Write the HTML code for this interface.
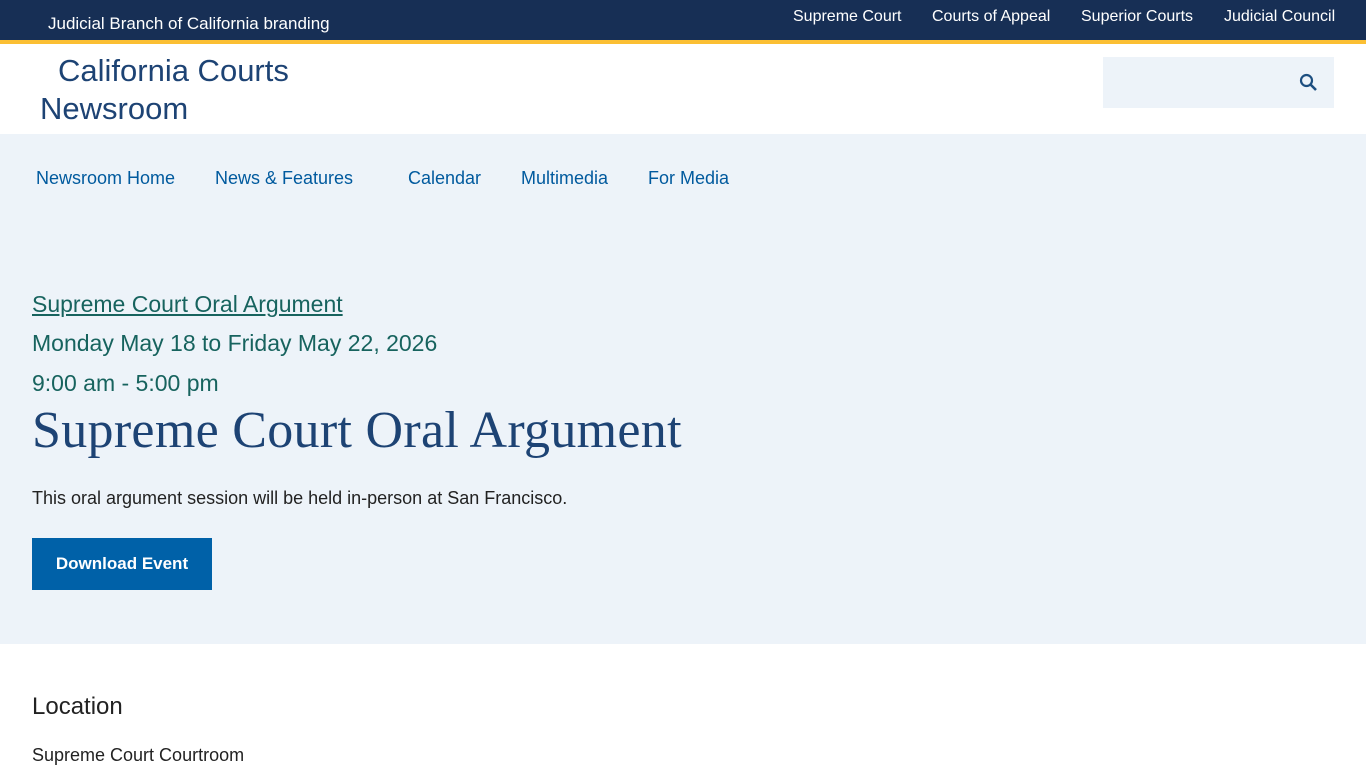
<!DOCTYPE html>
<html><head><meta charset="utf-8"><style>
*{margin:0;padding:0;box-sizing:border-box}
body{width:1366px;height:768px;overflow:hidden;font-family:"Liberation Sans",sans-serif;background:#fff}
.top{height:40px;background:#172f55;position:relative;color:#fff}
.brand{position:absolute;left:32px;top:14px;font-size:17px}
.tl{position:absolute;top:8px;font-size:16px}
.stripe{height:4px;background:#fbbf33}
.hdr{height:90px;position:relative}
.logo{position:absolute;left:40px;top:8px;font-size:31px;line-height:38px;color:#1d4374}
.search{position:absolute;left:1103px;top:13px;width:231px;height:51px;background:#edf3f9}
.search svg{position:absolute;left:196px;top:16px}
.blue{background:#edf3f9;height:510px;position:relative}
.nav a{position:absolute;top:34px;font-size:18px;color:#005a9e;text-decoration:none}
.t{position:absolute;left:32px;color:#17635e;font-size:23px}
h1{position:absolute;left:32px;top:267px;font-family:"Liberation Serif",serif;font-weight:normal;font-size:52px;color:#1d4374;letter-spacing:0.3px}
.p{position:absolute;left:32px;top:354px;font-size:18px;color:#222}
.btn{position:absolute;left:32px;top:404px;width:180px;height:52px;background:#0061a8;color:#fff;font-weight:bold;font-size:17px;text-align:center;line-height:52px}
.loc{position:absolute;left:32px;top:693px;font-size:24px;color:#222}
.cr{position:absolute;left:32px;top:745px;font-size:18px;color:#222}
</style></head><body>
<div class="top"><span class="brand"><span style="display:inline-block;width:16px"></span>Judicial Branch of California branding</span>
<span class="tl" style="left:793px">Supreme Court</span>
<span class="tl" style="left:932px">Courts of Appeal</span>
<span class="tl" style="left:1081px">Superior Courts</span>
<span class="tl" style="left:1224px">Judicial Council</span></div>
<div class="stripe"></div>
<div class="hdr"><div class="logo"><span style="display:inline-block;width:18px"></span>California Courts<br>Newsroom</div>
<div class="search"><svg width="20" height="20" viewBox="0 0 20 20"><circle cx="7.5" cy="7.5" r="5.5" fill="none" stroke="#1d4f80" stroke-width="2.2"/><path d="M11.5 11.5L17 17" stroke="#1d4f80" stroke-width="2.6"/></svg></div></div>
<div class="blue">
<div class="nav"><a style="left:36px">Newsroom Home</a><a style="left:215px">News &amp; Features</a><a style="left:408px">Calendar</a><a style="left:521px">Multimedia</a><a style="left:648px">For Media</a></div>
<div class="t" style="top:157px;text-decoration:underline">Supreme Court Oral Argument</div>
<div class="t" style="top:196px">Monday May 18 to Friday May 22, 2026</div>
<div class="t" style="top:236px">9:00 am - 5:00 pm</div>
<h1>Supreme Court Oral Argument</h1>
<div class="p">This oral argument session will be held in-person at San Francisco.</div>
<div class="btn">Download Event</div>
</div>
<div class="loc">Location</div>
<div class="cr">Supreme Court Courtroom</div>
</body></html>
